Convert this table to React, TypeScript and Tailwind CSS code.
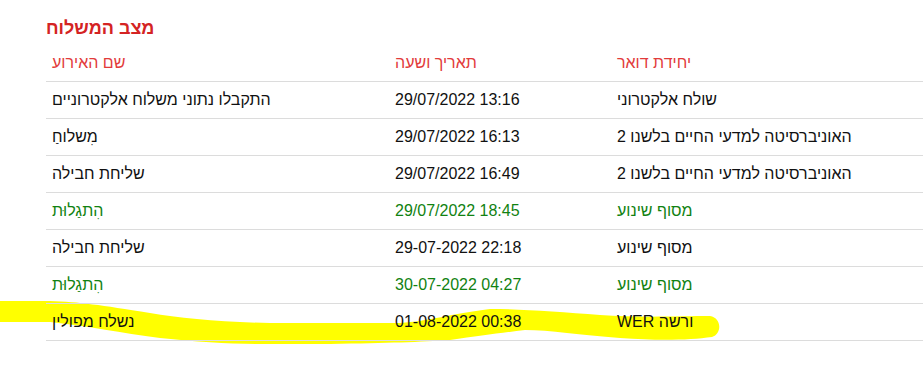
type Row = {
  unit: string
  date: string
  event: string
  green?: boolean
}

const rows: Row[] = [
  { unit: "שולח אלקטרוני", date: "29/07/2022 13:16", event: "התקבלו נתוני משלוח אלקטרוניים" },
  { unit: "האוניברסיטה למדעי החיים בלשנו 2", date: "29/07/2022 16:13", event: "מִשלוחַ" },
  { unit: "האוניברסיטה למדעי החיים בלשנו 2", date: "29/07/2022 16:49", event: "שליחת חבילה" },
  { unit: "מסוף שינוע", date: "29/07/2022 18:45", event: "הִתגַלוּת", green: true },
  { unit: "מסוף שינוע", date: "29-07-2022 22:18", event: "שליחת חבילה" },
  { unit: "מסוף שינוע", date: "30-07-2022 04:27", event: "הִתגַלוּת", green: true },
  { unit: "ורשה WER", date: "01-08-2022 00:38", event: "נשלח מפולין" },
]

// hand-drawn highlighter stroke over the last row
function Highlight() {
  return (
    <svg className="absolute left-0 top-0 pointer-events-none" width="923" height="371" viewBox="0 0 923 371">
      <path
        fill="#ffff00"
        d="M0 301 L50 301 C80 302 100 305 150 313 C180 318 220 322 270 323 L400 323 C430 321 450 314 490 309 C520 309 560 312 600 315 C640 318 680 316 710 316 C722 318 722 334 712 337 C690 340 660 341 620 338 C580 335 550 330 525 330 C500 333 480 336 450 340 C420 342 390 343 330 344 L265 344 C230 344 200 342 160 338 C120 333 90 326 50 322 L0 322 Z"
      />
    </svg>
  )
}

export default function App() {
  return (
    <div className="relative w-[923px] h-[371px] overflow-hidden bg-white" style={{ fontFamily: '"Liberation Sans", Arial, sans-serif' }}>
      <Highlight />
      <div dir="rtl" className="relative ml-[46px] w-[877px]">
        <div className="h-[45px] pt-[17px] text-left text-[18px] leading-[22px] font-bold text-[#d42323]">מצב המשלוח</div>
        <div className="grid grid-cols-[1fr_222px_343px] h-[37px] border-b border-[#dcdcdc] text-[16px] text-[#e23b3b]">
          <div className="flex items-center justify-end px-[6px]">יחידת דואר</div>
          <div className="flex items-center justify-end px-[6px]">תאריך ושעה</div>
          <div className="flex items-center justify-end px-[6px]">שם האירוע</div>
        </div>
        {rows.map((r, i) => (
          <div
            key={i}
            className={
              "grid grid-cols-[1fr_222px_343px] h-[37px] border-b border-[#dcdcdc] text-[16px] " +
              (r.green ? "text-[#118211]" : "text-[#111111]")
            }
          >
            <div className="flex items-center justify-end px-[6px]">{r.unit}</div>
            <div className="flex items-center justify-end px-[6px]">
              <span dir="ltr">{r.date}</span>
            </div>
            <div className="flex items-center justify-end px-[6px]">{r.event}</div>
          </div>
        ))}
      </div>
    </div>
  )
}
